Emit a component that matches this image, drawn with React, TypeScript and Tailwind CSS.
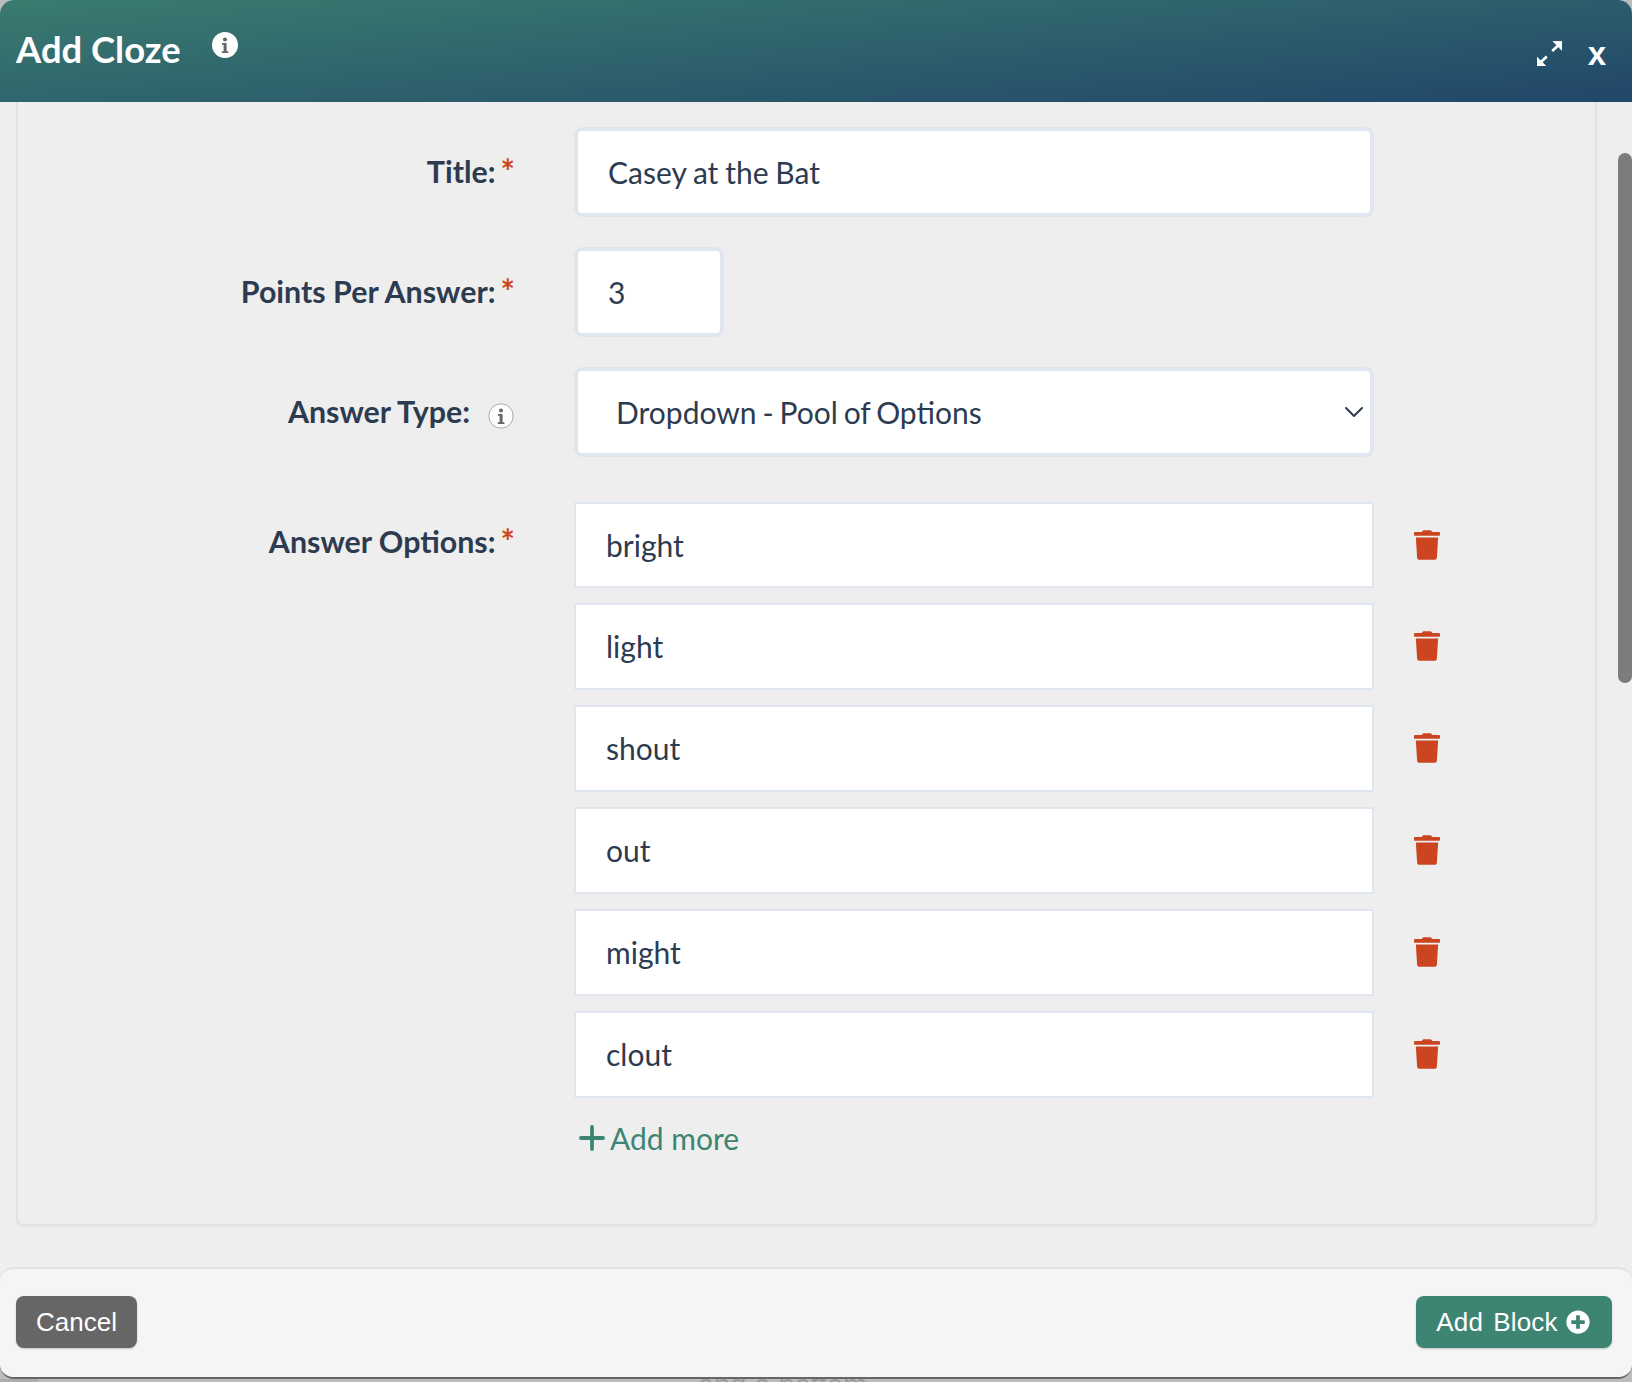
import React from 'react';
import { FaTrash, FaPlusCircle } from 'react-icons/fa';
import { ChevronDown, Plus } from 'lucide-react';

const options = ['bright', 'light', 'shout', 'out', 'might', 'clout'];

const InfoIcon = ({ outline }: { outline?: boolean }) => (
  <svg viewBox="0 0 26 26" className="h-[26px] w-[26px]">
    <circle cx="13" cy="13" r={outline ? 12.2 : 13} fill="#fff" stroke={outline ? '#a8a8a8' : 'none'} strokeWidth="1" />
    <circle cx="13" cy="7.6" r="2" fill="#666" />
    <path d="M10 11h4.6v8.2H16.4V21H9.8v-1.8h1.8v-6.4H10z" fill="#666" />
  </svg>
);

const ExpandIcon = () => (
  <svg viewBox="0 0 24 24" className="h-[25px] w-[25px]" fill="#fff" stroke="#fff">
    <path d="M15.5 0.5H24V9z" strokeWidth="0.8" />
    <path d="M0 24V15.5L8.5 24z" strokeWidth="0.8" />
    <path d="M20 4.5L14.6 9.6M4 20l5.4-5.1" strokeWidth="2.6" fill="none" />
  </svg>
);

const Required = () => (
  <span className="-mr-[1px] ml-[5px] h-[26px] self-start text-[34px] leading-[38px] font-bold text-[#cc4520]">*</span>
);

const Label = ({ children, className }: { children: React.ReactNode; className?: string }) => (
  <label className={`flex w-[514px] shrink-0 justify-end text-[30.4px] leading-[38px] font-bold text-[#2d3b50] ${className ?? ''}`}>
    {children}
  </label>
);

const fieldClass = 'rounded-[8px] border-[4px] border-[#e0e6ef] bg-white text-[30px] text-[#2d3b50] outline-none';

export default function App() {
  return (
    <div className="h-[1382px] w-[1632px] overflow-hidden bg-[#bcbcbc] font-['Lato',sans-serif]">
      <div className="flex h-[1379px] flex-col overflow-hidden rounded-[14px] border-b-2 border-[#666] bg-[#eeeeee]">
        <header className="flex h-[102px] shrink-0 items-start bg-[linear-gradient(175deg,#3a7b6f,#214669)] pr-[26px] pl-[16px] text-white">
          <h1 className="mt-[27px] text-[36.4px] leading-[44px] font-bold">Add Cloze</h1>
          <span className="mt-[32px] ml-[31px]"><InfoIcon /></span>
          <button className="mt-[41px] ml-auto"><ExpandIcon /></button>
          <button className="mt-[34px] ml-[26px] font-['Liberation_Sans',sans-serif] text-[33px] leading-[40px] font-bold">x</button>
        </header>

        <div className="flex min-h-0 flex-1">
          <div className="min-w-0 flex-1 pb-[41px] pl-[16px]">
            <main className="h-full rounded-b-[8px] border-x-2 border-b-2 border-[#e2e2e2] pt-[25px] shadow-[0_1px_2px_rgba(0,0,0,0.06)]">
              <div className="-ml-[18px] flex flex-col">
                <div className="flex items-start">
                  <Label className="mt-[25px]">Title:<Required /></Label>
                  <input readOnly value="Casey at the Bat" className={`ml-[60px] h-[90px] w-[800px] pl-[30px] [word-spacing:-0.9px] ${fieldClass}`} />
                </div>
                <div className="mt-[30px] flex items-start">
                  <Label className="mt-[25px]">Points Per Answer:<Required /></Label>
                  <input readOnly value="3" className={`ml-[60px] h-[90px] w-[150px] pl-[30px] ${fieldClass}`} />
                </div>
                <div className="mt-[30px] flex items-start">
                  <Label className="mt-[25px] items-center">
                    Answer Type:<span className="mt-[10px] ml-[18px] flex"><InfoIcon outline /></span>
                  </Label>
                  <div className="relative ml-[60px] w-[800px]">
                    <select defaultValue="pool" className={`h-[90px] w-full appearance-none pl-[38px] [word-spacing:-1.8px] ${fieldClass}`}>
                      <option value="pool">Dropdown - Pool of Options</option>
                    </select>
                    <ChevronDown className="pointer-events-none absolute top-[29px] right-[4px] h-[32px] w-[32px] text-[#2d3b50]" strokeWidth={1.5} />
                  </div>
                </div>
                <div className="mt-[45px] flex items-start">
                  <Label className="mt-[20px]">Answer Options:<Required /></Label>
                  <div className="ml-[60px] flex flex-col gap-[15px]">
                    {options.map((option, i) => (
                      <div key={option} className="flex items-center">
                        <input readOnly value={option} className={`${i === 0 ? 'h-[86px]' : 'h-[87px] pb-[1px]'} w-[800px] border-2 border-[#e0e6ef] bg-white pl-[30px] text-[30px] text-[#2d3b50] outline-none`} />
                        <FaTrash className="mb-[1px] ml-[40px] h-[30px] w-[26px] text-[#cc4520]" />
                      </div>
                    ))}
                    <button className="mt-[5px] flex h-[40px] items-center text-[30px] leading-[40px] text-[#3d8572]">
                      <Plus className="-mr-[1px] -ml-[1px] h-[38px] w-[38px] shrink-0" strokeWidth={2.4} />
                      <span>Add more</span>
                    </button>
                  </div>
                </div>
              </div>
            </main>
          </div>
          <div className="ml-[21px] w-[14px] shrink-0 pt-[51px]">
            <div className="h-[530px] rounded-full bg-[#7c7c7c]" />
          </div>
        </div>

        <footer className="flex h-[110px] shrink-0 items-start justify-between rounded-[14px] border-t-2 border-[#e2e2e2] bg-[#f5f5f5] pt-[27px] pr-[20px] pl-[16px] font-['Liberation_Sans',sans-serif] text-[26px] text-white">
          <button className="h-[52px] w-[121px] rounded-[8px] bg-[#666666] shadow-[0_1px_2px_rgba(0,0,0,0.2)]">Cancel</button>
          <button className="flex h-[52px] w-[196px] items-center justify-center gap-[8px] rounded-[8px] bg-[#3d8572] pr-[2px] shadow-[0_1px_2px_rgba(0,0,0,0.2)]">
            <span className="tracking-[0.2px] [word-spacing:2.6px]">Add Block</span>
            <FaPlusCircle className="h-[24px] w-[24px]" />
          </button>
        </footer>
      </div>
      <div className="flex h-[3px] overflow-hidden font-['Liberation_Sans',sans-serif] text-[29px] leading-[12px] text-[#999]">
        <div className="w-[38px] shrink-0 bg-[#acacac]" />
        <span className="ml-[660px] blur-[0.6px]">and a bottom</span>
      </div>
    </div>
  );
}
